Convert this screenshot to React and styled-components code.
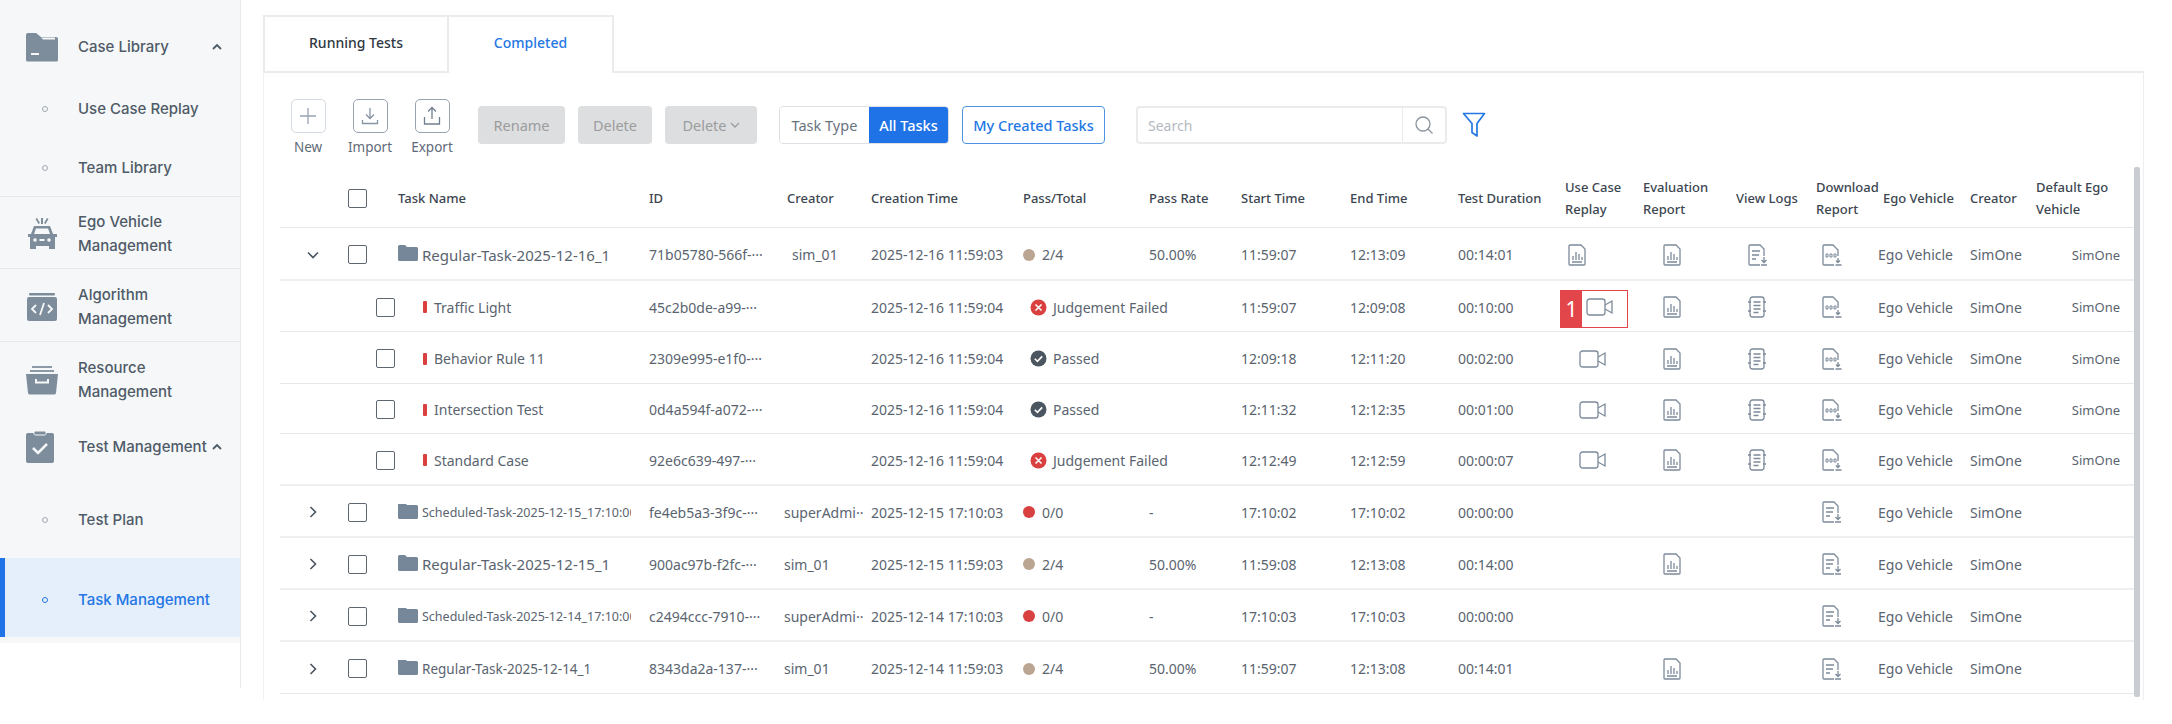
import React from 'react';
import styled, { createGlobalStyle } from 'styled-components';

const Global = createGlobalStyle`
  html, body { margin: 0; padding: 0; background: #fff; }
  * { box-sizing: border-box; }
  body { font-family: "Noto Sans", "Liberation Sans", sans-serif; color: #56606b; }
`;

const Page = styled.div`display: flex; width: 2172px; height: 724px; overflow: hidden; background: #fff;`;
const SideRail = styled.aside`width: 241px; height: 688px; flex: none; border-right: 1px solid #e8eaec;`;
const Nav = styled.nav`background: #f6f7f8; height: 643px;`;
const NavGroup = styled.div`
  display: flex; align-items: center; height: ${p => p.$h}px; padding: ${p => p.$pt || 0}px 17px 0 25px;
  border-bottom: ${p => p.$line ? '1px solid #e6e8ea' : 'none'};
  border-top: ${p => p.$top ? '1px solid #e6e8ea' : 'none'};
  font: 500 15px/23.5px Inter, sans-serif; color: #4f5b68;
`;
const NavIconBox = styled.span`width: 53px; flex: none; display: flex; svg { display: block; }`;
const NavChevron = styled.svg`margin-left: auto; width: 12px; height: 8px; flex: none;`;
const SubItem = styled.div`
  display: flex; align-items: center; height: ${p => p.$h}px; padding-left: ${p => p.$active ? 37 : 42}px; padding-top: ${p => p.$pt || 2}px;
  font: 500 15px Inter, sans-serif; color: ${p => p.$active ? '#2477e4' : '#4f5b68'};
  background: ${p => p.$active ? '#e5eefb' : 'transparent'};
  border-left: ${p => p.$active ? '5px solid #1f73e6' : 'none'};
`;
const Dot = styled.i`
  width: 6px; height: 6px; border-radius: 50%; margin-right: 30px; flex: none;
  border: 1.2px solid ${p => p.$active ? '#2477e4' : '#a0a8b0'};
`;
const Main = styled.main`flex: none; width: 1881px; margin-left: 22px; padding-top: 15px;`;
const TabBar = styled.div`display: flex; height: 58px; border-bottom: 2px solid #e9ebed;`;
const Tab = styled.div`
  display: flex; align-items: center; justify-content: center; height: ${p => p.$active ? 58 : 56}px; width: ${p => p.$w}px;
  padding-bottom: ${p => p.$active ? 5 : 3}px;
  border: 2px solid #e9ebed; border-bottom: none; border-left-width: ${p => p.$active ? 0 : 2}px;
  background: #fff; font-size: 14px; font-weight: 500;
  color: ${p => p.$active ? '#2477e4' : '#2f3842'};
`;
const Panel = styled.div`border-left: 1px solid #f0f1f2; border-right: 1px solid #eceeef; height: 627px;`;
const Toolbar = styled.div`display: flex; align-items: flex-start; height: 93px; padding: 26px 0 0 13px;`;
const ToolColumn = styled.div`display: flex; flex-direction: column; align-items: center; width: 62px; font-size: 13.5px; line-height: 18px; color: #5f6b78;`;
const ToolIcon = styled.div`
  width: 35px; height: 34px; border-radius: 5px; margin-bottom: 5px; display: flex; align-items: center; justify-content: center;
  border: 1.5px solid ${p => p.$light ? '#d5dbe2' : '#96a3b1'};
`;
const Disabled = styled.div`
  margin: 7px 0 0 ${p => p.$ml}px; width: ${p => p.$w}px; height: 38px; border-radius: 4px; background: #dddedf;
  display: flex; align-items: center; justify-content: center; gap: 3px; font-size: 14.5px; color: #9b9c9d;
`;
const Segment = styled.div`
  margin: 7px 0 0 22px; display: flex; width: 170px; height: 38px; border: 1px solid #dcdfe3; border-radius: 4px;
  font-size: 14.5px; overflow: hidden;
`;
const SegLabel = styled.div`
  width: ${p => p.$w}px; display: flex; align-items: center; justify-content: center;
  color: ${p => p.$on ? '#fff' : '#69737e'}; background: ${p => p.$on ? '#1f73e6' : '#fff'};
  font-weight: ${p => p.$on ? 500 : 400};
`;
const Outline = styled.div`
  margin: 7px 0 0 13px; width: 143px; height: 38px; border: 1.5px solid #4d93e4; border-radius: 4px;
  display: flex; align-items: center; justify-content: center; color: #2477e4; font-size: 14.5px; font-weight: 500;
`;
const SearchBox = styled.div`
  margin: 7px 0 0 31px; width: 311px; height: 38px; border: 2px solid #e9ebed; border-radius: 4px; display: flex; align-items: center;
`;
const SearchText = styled.div`flex: 1; padding-left: 10px; font-size: 14px; color: #b4b9bf;`;
const SearchBtn = styled.div`width: 43px; height: 100%; border-left: 1px solid #e9ebed; display: flex; align-items: center; justify-content: center;`;
const Funnel = styled.svg`margin: 13px 0 0 15px; width: 24px; height: 26px;`;
const TableArea = styled.div`display: flex; padding-left: 16px; height: 530px; margin-top: 1px;`;
const Table = styled.div`width: 1854px; flex: none;`;
const Scrollbar = styled.div`width: 6px; height: 530px; margin-right: 3px; background: #c9ccd0; border-radius: 2px;`;
const COLS = '118px 251px 135px 87px 152px 126px 92px 109px 108px 107px 78px 93px 80px 62px 92px 66px 98px';
const HeadRow = styled.div`
  display: grid; grid-template-columns: ${COLS}; height: 61px; padding-top: 2px; align-items: center; border-bottom: 1px solid #e6e8ea;
  font-size: 13px; font-weight: 500; line-height: 22px; color: #3c4650;
`;
const Row = styled.div`
  display: grid; grid-template-columns: ${COLS}; height: ${p => p.$h}px; padding-top: 2px; align-items: center;
  border-bottom: ${p => p.$thick ? '2px solid #eeeff0' : '1px solid #e6e8ea'};
  font-size: 14px; color: #5a646f;
`;
const Cell = styled.div`
  position: relative; display: flex; align-items: center; min-width: 0; white-space: ${p => p.$wrap ? 'normal' : 'nowrap'};
  padding-left: ${p => p.$pl || 0}px;
  justify-content: ${p => p.$right ? 'flex-end' : 'flex-start'};
  padding-right: ${p => p.$right ? 14 : 0}px;
  font-size: ${p => p.$fs ? p.$fs + 'px' : 'inherit'};
`;
const Lead = styled.div`position: relative; display: flex; align-items: center; height: 100%; padding-left: ${p => p.$child ? 96 : 68}px;`;
const ExpandSlot = styled.span`position: absolute; left: 26px; top: 50%; transform: translateY(-50%); display: flex;`;
const Box = styled.span`width: 19px; height: 19px; border: 1.5px solid #5e6670; border-radius: 2px; background: #fff; display: block; flex: none;`;
const NameCell = styled.div`display: flex; align-items: center; width: 233px; overflow: hidden; white-space: nowrap; font-size: ${p => p.$fs || 14}px;`;
const FolderGlyph = styled.svg`width: 20px; height: 16px; flex: none; margin: -3px 4px 0 0;`;
const RedBar = styled.i`width: 4px; height: 12px; background: #d8413f; border-radius: 1px; margin: 0 7px 0 25px; flex: none;`;
const StatusDot = styled.i`width: 12px; height: 12px; border-radius: 50%; background: ${p => p.$c}; margin-right: 7px; flex: none;`;
const StatusIcon = styled.svg`width: 17px; height: 17px; flex: none; margin: 0 6px 0 7px;`;
const Marker = styled.div`
  position: absolute; left: -5px; top: -17px; width: 68px; height: 38px; border: 1px solid #e2454a; display: flex; background: #fff;
`;
const MarkerNum = styled.span`
  width: 21px; background: #e2454a; color: #fff; font-size: 21px; display: flex; align-items: center; justify-content: center;
`;
const MarkerIcon = styled.span`padding: 7px 0 0 4px; display: flex;`;

const Ico = { c: '#7d8b9a' };
const Folder = () => (<svg width="34" height="30" viewBox="0 0 34 30"><path fill="#7e8d9c" d="M1 3a2 2 0 0 1 2-2h8l5 4h15a2 2 0 0 1 2 2v21a1.500 1.500 0 0 1-1.500 1.500H2.500A1.500 1.500 0 0 1 1 28z"/><path fill="#f6f7f8" d="M16 5.500h14v2H18z"/><rect x="6" y="21" width="8" height="2" fill="#f6f7f8"/></svg>);
const Car = () => (<svg width="34" height="34" viewBox="0 0 34 34"><path fill="#7e8d9c" d="M16 1h2v6h-2zM10.500 2l1.500-1 3 5-1.500 1zM23.500 2L22 1l-3 5 1.500 1zM9 9h16l3 8h4v3h-2v12h-6v-3H11v3H5V20H3v-3h3z"/><path fill="#f6f7f8" d="M11 11.500h12l2 5.500H9z"/><circle cx="10" cy="23" r="1.800" fill="#f6f7f8"/><circle cx="24" cy="23" r="1.800" fill="#f6f7f8"/><rect x="14.500" y="22" width="5" height="2" fill="#f6f7f8"/></svg>);
const Code = () => (<svg width="34" height="30" viewBox="0 0 34 30"><rect x="4" y="1" width="26" height="2.500" rx="1" fill="#7e8d9c"/><rect x="2" y="5" width="30" height="24" rx="2" fill="#7e8d9c"/><path d="M11 13l-4 4 4 4M23 13l4 4-4 4M19 11l-4 12" fill="none" stroke="#f6f7f8" strokeWidth="1.800"/></svg>);
const Archive = () => (<svg width="34" height="30" viewBox="0 0 34 30"><rect x="7" y="1" width="20" height="2" fill="#8c99a7"/><rect x="5" y="5" width="24" height="2" fill="#8c99a7"/><path fill="#7e8d9c" d="M1 9h32l-2 19a2 2 0 0 1-2 1.500H5A2 2 0 0 1 3 28z"/><path d="M11 14v3.500h12V14" fill="none" stroke="#f6f7f8" strokeWidth="2"/></svg>);
const Clip = () => (<svg width="30" height="34" viewBox="0 0 30 34"><rect x="1" y="3" width="28" height="30" rx="2" fill="#7e8d9c"/><rect x="9" y="1" width="12" height="4" rx="1.500" fill="#7e8d9c" stroke="#f6f7f8"/><path d="M8 18l5 5 9-9" fill="none" stroke="#f6f7f8" strokeWidth="2.500"/></svg>);
const Up = () => (<NavChevron viewBox="0 0 12 8"><path d="M2 6l4-4 4 4" fill="none" stroke="#4f5b68" strokeWidth="1.800"/></NavChevron>);
const Chevron = ({ open }) => (<svg width="14" height="14" viewBox="0 0 14 14"><path d={open ? 'M2 4.500l5 5 5-5' : 'M4.500 2l5 5-5 5'} fill="none" stroke="#4a5561" strokeWidth="1.600"/></svg>);
const FolderMini = () => (<FolderGlyph viewBox="0 0 20 16"><path fill="#76879a" d="M0 1.500A1.500 1.500 0 0 1 1.500 0H7l2 2h9.500A1.500 1.500 0 0 1 20 3.500v11a1.500 1.500 0 0 1-1.500 1.500h-17A1.500 1.500 0 0 1 0 14.500z"/></FolderGlyph>);
const S = { fill: 'none', stroke: Ico.c, strokeWidth: 1.3 };
const Report = () => (<svg width="20" height="22" viewBox="0 0 20 22"><path {...S} d="M2 2a1 1 0 0 1 1-1h11l4 4v15a1 1 0 0 1-1 1H3a1 1 0 0 1-1-1z"/><path {...S} d="M5 18h10M6 16v-4M9 16V8M12 16v-6M15 16v-3"/></svg>);
const Camera = () => (<svg width="27" height="18" viewBox="0 0 27 18"><rect x="1" y="1" width="18" height="16" rx="2.500" {...S}/><path {...S} d="M19 7l7-4v12l-7-4"/></svg>);
const ListDown = () => (<svg width="21" height="22" viewBox="0 0 21 22"><path {...S} d="M13 21H3a1 1 0 0 1-1-1V2a1 1 0 0 1 1-1h10l4 4v7M5 7h8M5 11h7M5 15h4M17 13v5M14.500 16l2.500 2.500 2.500-2.500M14 21h6"/></svg>);
const Notebook = () => (<svg width="20" height="22" viewBox="0 0 20 22"><rect x="3" y="1" width="14" height="20" rx="2.500" {...S}/><path {...S} d="M6.500 6h7M6.500 9.500h7M6.500 13h7M6.500 16.500h5M1 6h3M1 15h3M16 6h3M16 15h3"/></svg>);
const LogDoc = () => (<svg width="21" height="22" viewBox="0 0 21 22"><path {...S} d="M13 21H3a1 1 0 0 1-1-1V2a1 1 0 0 1 1-1h9l5 5v6"/><path fill="none" stroke={Ico.c} strokeWidth="1" d="M5 10h2v3H5zM9 10h2v3H9zM13 10h2v3h-2z"/><path {...S} d="M17 14v4M15 16.500l2 2 2-2M14.500 21h6"/></svg>);
const PlusI = () => (<svg width="18" height="18" viewBox="0 0 18 18"><path d="M9 1v16M1 9h16" stroke="#98a3ae" strokeWidth="1.300" fill="none"/></svg>);
const ImportI = () => (<svg width="18" height="18" viewBox="0 0 18 18"><path d="M9 1v10M5 7.500L9 11.500l4-4M1.500 13v3.500h15V13" stroke="#8794a2" strokeWidth="1.300" fill="none"/></svg>);
const ExportI = () => (<svg width="18" height="20" viewBox="0 0 18 20"><path d="M9 13V1.500M5 5.500L9 1.500l4 4M1.500 11v7h15v-7" stroke="#71808f" strokeWidth="1.300" fill="none"/></svg>);

const CrossIcon = () => (<StatusIcon viewBox="0 0 17 17"><circle cx="8.500" cy="8.500" r="8" fill="#d8413f"/><path d="M5.500 5.500l6 6M11.500 5.500l-6 6" stroke="#fff" strokeWidth="1.600"/></StatusIcon>);
const CheckIcon = () => (<StatusIcon viewBox="0 0 17 17"><circle cx="8.500" cy="8.500" r="8" fill="#4c5661"/><path d="M4.800 8.800l2.600 2.600 4.800-5" stroke="#fff" strokeWidth="1.600" fill="none"/></StatusIcon>);

const heads = [
  ['ID', 0], ['Creator', 3], ['Creation Time', 0], ['Pass/Total', 0], ['Pass Rate', 0], ['Start Time', 0], ['End Time', 0],
  ['Test Duration', 0], ['Use Case Replay', 0, 70], ['Evaluation Report', 0, 80], ['View Logs', 0], ['Download Report', 0, 62], ['Ego Vehicle', 5], ['Creator', 0], ['Default Ego Vehicle', 0, 84],
];

const rows = [
  { h: 53, thick: 1, open: 1, fs: 15, name: 'Regular-Task-2025-12-16_1', id: '71b05780-566f-···', by: 'sim_01', byPl: 8, time: '2025-12-16 11:59:03', dot: '#baa593', pass: '2/4', rate: '50.00%', s: '11:59:07', e: '12:13:09', d: '00:14:01', replay: 'report', ev: 1, logs: 'list', dl: 'log', def: 1 },
  { h: 51, child: 1, name: 'Traffic Light', id: '45c2b0de-a99-···', time: '2025-12-16 11:59:04', st: 'fail', s: '11:59:07', e: '12:09:08', d: '00:10:00', replay: 'mark', ev: 1, logs: 'note', dl: 'log', def: 1 },
  { h: 52, child: 1, name: 'Behavior Rule 11', id: '2309e995-e1f0-···', time: '2025-12-16 11:59:04', st: 'ok', s: '12:09:18', e: '12:11:20', d: '00:02:00', replay: 'cam', ev: 1, logs: 'note', dl: 'log', def: 1 },
  { h: 50, child: 1, name: 'Intersection Test', id: '0d4a594f-a072-···', time: '2025-12-16 11:59:04', st: 'ok', s: '12:11:32', e: '12:12:35', d: '00:01:00', replay: 'cam', ev: 1, logs: 'note', dl: 'log', def: 1 },
  { h: 52, child: 1, thick: 1, name: 'Standard Case', id: '92e6c639-497-···', time: '2025-12-16 11:59:04', st: 'fail', s: '12:12:49', e: '12:12:59', d: '00:00:07', replay: 'cam', ev: 1, logs: 'note', dl: 'log', def: 1 },
  { h: 52, thick: 1, fs: 12.500, name: 'Scheduled-Task-2025-12-15_17:10:00', id: 'fe4eb5a3-3f9c-···', by: 'superAdmi··', time: '2025-12-15 17:10:03', dot: '#d8413f', pass: '0/0', rate: '-', s: '17:10:02', e: '17:10:02', d: '00:00:00', dl: 'list' },
  { h: 52, thick: 1, fs: 15, name: 'Regular-Task-2025-12-15_1', id: '900ac97b-f2fc-···', by: 'sim_01', time: '2025-12-15 11:59:03', dot: '#baa593', pass: '2/4', rate: '50.00%', s: '11:59:08', e: '12:13:08', d: '00:14:00', ev: 1, dl: 'list' },
  { h: 52, thick: 1, fs: 12.500, name: 'Scheduled-Task-2025-12-14_17:10:00', id: 'c2494ccc-7910-···', by: 'superAdmi··', time: '2025-12-14 17:10:03', dot: '#d8413f', pass: '0/0', rate: '-', s: '17:10:03', e: '17:10:03', d: '00:00:00', dl: 'list' },
  { h: 52, fs: 13.500, name: 'Regular-Task-2025-12-14_1', id: '8343da2a-137-···', by: 'sim_01', time: '2025-12-14 11:59:03', dot: '#baa593', pass: '2/4', rate: '50.00%', s: '11:59:07', e: '12:13:08', d: '00:14:01', ev: 1, dl: 'list' },
];

const Replay = ({ kind }) => {
  if (kind === 'report') return <Cell $pl={2}><Report /></Cell>;
  if (kind === 'cam') return <Cell $pl={14}><Camera /></Cell>;
  if (kind === 'mark') return (
    <Cell $pl={14}>
      <Marker><MarkerNum>1</MarkerNum><MarkerIcon><Camera /></MarkerIcon></Marker>
    </Cell>
  );
  return <Cell />;
};

export default function App() {
  return (
    <Page>
      <Global />
      <SideRail>
        <Nav>
          <NavGroup $h={78} $pt={15}><NavIconBox><Folder /></NavIconBox>Case Library<Up /></NavGroup>
          <SubItem $h={59}><Dot />Use Case Replay</SubItem>
          <SubItem $h={59}><Dot />Team Library</SubItem>
          <NavGroup $h={73} $line $top $pt={2}><NavIconBox><Car /></NavIconBox><span>Ego Vehicle<br />Management</span></NavGroup>
          <NavGroup $h={73} $line $pt={3}><NavIconBox><Code /></NavIconBox><span>Algorithm<br />Management</span></NavGroup>
          <NavGroup $h={73} $pt={2}><NavIconBox><Archive /></NavIconBox><span>Resource<br />Management</span></NavGroup>
          <NavGroup $h={62} $pt={2}><NavIconBox><Clip /></NavIconBox>Test Management<Up /></NavGroup>
          <SubItem $h={81} $pt={4}><Dot />Test Plan</SubItem>
          <SubItem $h={79} $pt={4} $active><Dot $active />Task Management</SubItem>
        </Nav>
      </SideRail>
      <Main>
        <TabBar>
          <Tab $w={186}>Running Tests</Tab>
          <Tab $w={165} $active>Completed</Tab>
        </TabBar>
        <Panel>
          <Toolbar>
            <ToolColumn><ToolIcon $light><PlusI /></ToolIcon>New</ToolColumn>
            <ToolColumn><ToolIcon><ImportI /></ToolIcon>Import</ToolColumn>
            <ToolColumn><ToolIcon><ExportI /></ToolIcon>Export</ToolColumn>
            <Disabled $ml={15} $w={87}>Rename</Disabled>
            <Disabled $ml={13} $w={74}>Delete</Disabled>
            <Disabled $ml={13} $w={92}>Delete<svg width="10" height="8" viewBox="0 0 10 8"><path d="M1 2l4 4 4-4" fill="none" stroke="#9b9c9d" strokeWidth="1.300"/></svg></Disabled>
            <Segment><SegLabel $w={90}>Task Type</SegLabel><SegLabel $w={80} $on>All Tasks</SegLabel></Segment>
            <Outline>My Created Tasks</Outline>
            <SearchBox>
              <SearchText>Search</SearchText>
              <SearchBtn><svg width="20" height="20" viewBox="0 0 20 20"><circle cx="9" cy="9" r="7" fill="none" stroke="#8a949e" strokeWidth="1.300"/><path d="M14 14l4.500 4.500" stroke="#8a949e" strokeWidth="1.300"/></svg></SearchBtn>
            </SearchBox>
            <Funnel viewBox="0 0 24 26"><path d="M1.500 1.500h21L15 11.500V24l-5-3.500v-9z" fill="none" stroke="#2477e4" strokeWidth="1.700" strokeLinejoin="round"/></Funnel>
          </Toolbar>
          <TableArea>
            <Table>
              <HeadRow>
                <Lead><Box /></Lead>
                <Cell>Task Name</Cell>
                {heads.map(([t, pl, w], i) => (
                  <Cell key={i} $pl={pl} $wrap={!!w} style={w ? { width: w } : undefined}>{t}</Cell>
                ))}
              </HeadRow>
              {rows.map((r, i) => (
                <Row key={i} $h={r.h} $thick={r.thick}>
                  <Lead $child={r.child}>
                    {!r.child && <ExpandSlot><Chevron open={r.open} /></ExpandSlot>}
                    <Box />
                  </Lead>
                  <Cell>
                    <NameCell $fs={r.fs}>
                      {r.child ? <RedBar /> : <FolderMini />}
                      {r.name}
                    </NameCell>
                  </Cell>
                  <Cell>{r.id}</Cell>
                  <Cell $pl={r.byPl}>{r.by}</Cell>
                  <Cell>{r.time}</Cell>
                  <Cell>
                    {r.dot && <StatusDot $c={r.dot} />}
                    {r.st === 'fail' && <CrossIcon />}
                    {r.st === 'ok' && <CheckIcon />}
                    {r.pass || (r.st === 'fail' ? 'Judgement Failed' : 'Passed')}
                  </Cell>
                  <Cell>{r.rate}</Cell>
                  <Cell>{r.s}</Cell>
                  <Cell>{r.e}</Cell>
                  <Cell>{r.d}</Cell>
                  <Replay kind={r.replay} />
                  <Cell $pl={19}>{r.ev && <Report />}</Cell>
                  <Cell $pl={11}>{r.logs === 'list' ? <ListDown /> : r.logs === 'note' ? <Notebook /> : null}</Cell>
                  <Cell $pl={5}>{r.dl === 'log' ? <LogDoc /> : <ListDown />}</Cell>
                  <Cell>Ego Vehicle</Cell>
                  <Cell>SimOne</Cell>
                  <Cell $right $fs={13}>{r.def ? 'SimOne' : ''}</Cell>
                </Row>
              ))}
            </Table>
            <Scrollbar />
          </TableArea>
        </Panel>
      </Main>
    </Page>
  );
}
